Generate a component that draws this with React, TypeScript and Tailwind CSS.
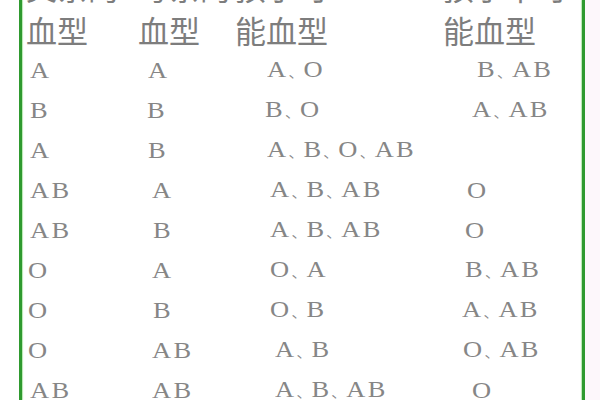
import React from "react";

type Cell = { t: string; pl: string };
type Row = { cells: Cell[]; head?: boolean; top?: boolean };

const rows: Row[] = [
  {
    head: true,
    top: true,
    cells: [
      { t: "父亲的", pl: "pl-[4px]" },
      { t: "母亲的", pl: "pl-[0px]" },
      { t: "孩子可", pl: "pl-[0px]" },
      { t: "孩子不可", pl: "pl-[3px]" },
    ],
  },
  {
    head: true,
    cells: [
      { t: "血型", pl: "pl-[4px]" },
      { t: "血型", pl: "pl-[0px]" },
      { t: "能血型", pl: "pl-[0px]" },
      { t: "能血型", pl: "pl-[3px]" },
    ],
  },
  {
    cells: [
      { t: "A", pl: "pl-[8px]" },
      { t: "A", pl: "pl-[10px]" },
      { t: "A、O", pl: "pl-[32px]" },
      { t: "B、AB", pl: "pl-[37px]" },
    ],
  },
  {
    cells: [
      { t: "B", pl: "pl-[8px]" },
      { t: "B", pl: "pl-[9px]" },
      { t: "B、O", pl: "pl-[30px]" },
      { t: "A、AB", pl: "pl-[32px]" },
    ],
  },
  {
    cells: [
      { t: "A", pl: "pl-[8px]" },
      { t: "B", pl: "pl-[10px]" },
      { t: "A、B、O、AB", pl: "pl-[32px]" },
      { t: "", pl: "pl-[0px]" },
    ],
  },
  {
    cells: [
      { t: "AB", pl: "pl-[8px]" },
      { t: "A", pl: "pl-[14px]" },
      { t: "A、B、AB", pl: "pl-[35px]" },
      { t: "O", pl: "pl-[27px]" },
    ],
  },
  {
    cells: [
      { t: "AB", pl: "pl-[8px]" },
      { t: "B", pl: "pl-[15px]" },
      { t: "A、B、AB", pl: "pl-[35px]" },
      { t: "O", pl: "pl-[25px]" },
    ],
  },
  {
    cells: [
      { t: "O", pl: "pl-[6px]" },
      { t: "A", pl: "pl-[14px]" },
      { t: "O、A", pl: "pl-[35px]" },
      { t: "B、AB", pl: "pl-[25px]" },
    ],
  },
  {
    cells: [
      { t: "O", pl: "pl-[6px]" },
      { t: "B", pl: "pl-[15px]" },
      { t: "O、B", pl: "pl-[35px]" },
      { t: "A、AB", pl: "pl-[22px]" },
    ],
  },
  {
    cells: [
      { t: "O", pl: "pl-[6px]" },
      { t: "AB", pl: "pl-[14px]" },
      { t: "A、B", pl: "pl-[40px]" },
      { t: "O、AB", pl: "pl-[23px]" },
    ],
  },
  {
    cells: [
      { t: "AB", pl: "pl-[8px]" },
      { t: "AB", pl: "pl-[14px]" },
      { t: "A、B、AB", pl: "pl-[40px]" },
      { t: "O", pl: "pl-[32px]" },
    ],
  },
];

function Letters({ t }: { t: string }) {
  const parts = t.split("、");
  return (
    <span className="inline-block origin-left scale-x-[1.15]">
      {parts.map((p, k) => (
        <React.Fragment key={k}>
          {k > 0 && (
            <span className="text-[13px] tracking-normal font-['Noto_Sans_CJK_SC',sans-serif]">
              、
            </span>
          )}
          <span>{p}</span>
        </React.Fragment>
      ))}
    </span>
  );
}

export default function App() {
  return (
    <div className="w-[600px] h-[400px] overflow-hidden bg-white flex font-['Noto_Sans_CJK_SC','Noto_Sans',sans-serif]">
      <div className="w-[19px] shrink-0 bg-white" />
      <div className="w-[3px] shrink-0 bg-[#2f9a2f] shadow-[1px_0_1px_#b6e8b0]" />
      <div className="w-[560px] shrink-0 -mt-[33px] flex flex-col">
        {rows.map((r, i) => (
          <div
            key={i}
            className={`shrink-0 grid grid-cols-[116px_97px_205px_142px] ${
              r.top ? "h-[43px] items-start" : "h-[40px] items-center"
            }`}
          >
            {r.cells.map((c, j) =>
              r.head ? (
                <div
                  key={j}
                  className={`${c.pl} whitespace-nowrap leading-[40px] text-[#7d7d7d] text-[31px]`}
                >
                  {c.t}
                </div>
              ) : (
                <div
                  key={j}
                  className={`${c.pl} whitespace-nowrap leading-[40px] text-[#868686] text-[23px] tracking-[2px] font-['Liberation_Serif',serif]`}
                >
                  <Letters t={c.t} />
                </div>
              )
            )}
          </div>
        ))}
      </div>
      <div className="w-[3px] shrink-0 bg-[#2f9a2f] shadow-[-1px_0_1px_#b6e8b0,1px_0_1px_#b6e8b0]" />
      <div className="flex-1 bg-[#fdf7fb]" />
    </div>
  );
}
